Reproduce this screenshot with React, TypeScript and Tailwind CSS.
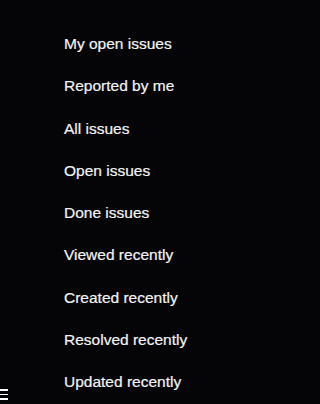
import React from "react";

const items = [
  "My open issues",
  "Reported by me",
  "All issues",
  "Open issues",
  "Done issues",
  "Viewed recently",
  "Created recently",
  "Resolved recently",
  "Updated recently",
];

export default function App() {
  return (
    <div
      className="relative w-full min-w-[254px] h-screen min-h-[404px] bg-[#050507] overflow-hidden text-white"
      style={{ fontFamily: '"Liberation Sans", Arial, sans-serif' }}
    >
      <ul className="pt-[34px] pl-[64px] flex flex-col">
        {items.map((t) => (
          <li key={t} className="h-[42.25px] text-[15.5px] leading-[20px] text-[#f4f4f4] [-webkit-text-stroke:0.2px_#f4f4f4]">
            {t}
          </li>
        ))}
      </ul>
      <div className="absolute left-0 top-[389px] flex flex-col gap-[3px]">
        <div className="w-[8px] h-[1.5px] bg-white" />
        <div className="w-[8px] h-[1.5px] bg-white" />
        <div className="w-[8px] h-[1.5px] bg-white" />
      </div>
    </div>
  );
}
